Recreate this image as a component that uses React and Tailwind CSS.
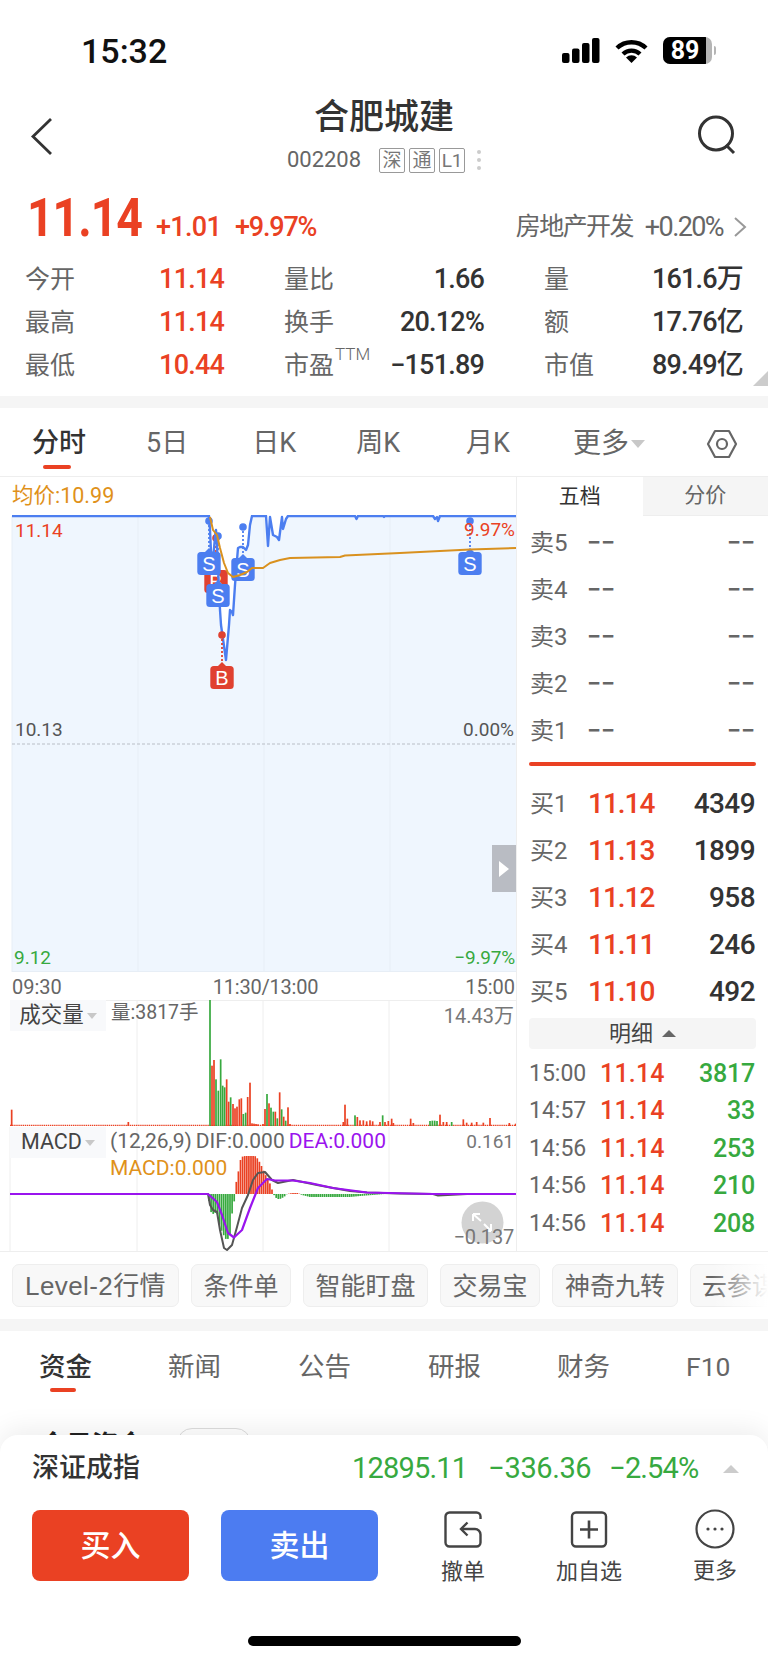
import React from "react";

const RED = "#ea4123";
const GREEN = "#37a93f";

// Intraday price line, in chart coordinates
const priceLine = [
  [12, 516], [209, 516], [210, 530], [211, 552], [213, 560], [215, 537], [216, 530], [217, 545], [218, 565], [219, 590],
  [220, 610], [221, 625], [226, 660], [229, 625], [230, 610], [232, 612], [233, 615], [235, 585], [237, 560], [238, 548],
  [240, 547], [243, 547], [246, 550], [248, 545], [250, 525], [252, 516], [266, 516], [268, 546], [270, 517], [273, 535],
  [277, 537], [279, 540], [282, 517], [283, 529], [286, 519], [288, 516], [355, 516], [356.5, 519], [358, 516], [383, 516],
  [384, 517], [385, 516], [433, 516], [435, 519], [437, 517], [438, 521], [440, 516], [516, 516],
];

// Average price line
const avgLine = [
  [210, 517], [213, 530], [217, 535], [220, 548], [224, 563], [228, 573], [233, 577], [240, 575], [247, 572], [252, 568],
  [263, 568], [270, 563], [280, 560], [290, 558], [340, 557], [345, 555.5], [400, 553], [470, 549.5], [516, 548],
];

const toPath = (pts) => pts.map((p, i) => `${i ? "L" : "M"}${p[0]} ${p[1]}`).join(" ");

// Volume bars around the morning burst: [x, top, colour]
const burstBars = [
  [60, 0, "g"], [66, 197, "r"], [72, 180, "r"], [78, 238, "g"], [85, 272, "g"], [92, 178, "g"], [98, 257, "g"], [104, 262, "g"],
  [110, 238, "r"], [116, 305, "r"], [122, 292, "g"], [129, 312, "r"], [135, 325, "r"], [141, 320, "r"], [148, 298, "r"],
  [154, 295, "r"], [160, 342, "g"], [167, 338, "g"], [173, 291, "r"], [180, 248, "r"], [186, 370, "r"], [192, 371, "r"],
  [198, 372, "r"], [204, 373, "r"], [219, 372, "r"], [225, 327, "r"], [231, 282, "g"], [237, 310, "r"], [243, 323, "g"],
  [250, 335, "g"], [256, 335, "r"], [262, 355, "g"], [269, 277, "r"], [275, 328, "g"], [281, 350, "r"], [287, 362, "g"],
  [294, 322, "r"], [300, 372, "r"],
].map(([z, top, c]) => ({ x: 190 + z / 3, h: (378 - top) / 3, c }));

// Afternoon volume bars: [x, top, colour]
const laterBars = [
  [35, 508, "r"], [385, 545, "r"], [1030, 545, "r"], [1035, 493, "r"], [1042, 535, "r"], [1065, 525, "g"], [1072, 530, "r"],
  [1080, 540, "r"], [1090, 540, "r"], [1100, 543, "r"], [1110, 540, "r"], [1118, 543, "r"], [1140, 545, "r"], [1148, 525, "g"],
  [1155, 545, "r"], [1165, 542, "r"], [1175, 535, "r"], [1180, 548, "r"], [1232, 535, "r"], [1240, 548, "r"], [1290, 542, "g"],
  [1297, 541, "g"], [1304, 541, "g"], [1311, 542, "g"], [1320, 523, "r"], [1330, 545, "r"], [1340, 545, "r"], [1355, 545, "g"],
  [1390, 537, "r"], [1400, 547, "r"], [1415, 547, "r"], [1430, 545, "r"], [1450, 547, "r"], [1470, 533, "r"], [1528, 548, "r"],
  [1547, 550, "r"],
].map(([z, top, c]) => ({ x: z / 3, h: (557 - top) / 3, c }));

const volumeBars = [...burstBars, ...laterBars];

// MACD histogram outline: [x, height] with positive values above the zero line
const macdOutline = [
  [208.5, -2], [210, -17], [213, -20], [217, -18], [220, -33], [223, -40], [227, -47], [230, -40], [232, -20], [234, -10],
  [235, 3], [237, 17], [239, 25], [241, 37], [245, 38], [250, 38], [255, 38], [258, 35], [262, 27], [265, 20], [268, 15],
  [271, 8], [273, 1], [274, -1], [277, -5], [280, -5], [284, -3], [287, 0], [292, 1], [298, 1], [302, -1], [310, -3],
  [330, -3], [350, -3], [360, -2], [385, 0], [516, 0],
];

const macdHeight = (x) => {
  for (let i = 1; i < macdOutline.length; i++) {
    const [x0, h0] = macdOutline[i - 1];
    const [x1, h1] = macdOutline[i];
    if (x <= x1) return h0 + ((x - x0) / (x1 - x0)) * (h1 - h0);
  }
  return 0;
};

const macdBars = [];
for (let x = 209; x < 390; x += 2.1) macdBars.push({ x, h: macdHeight(x) });

const difLine = [
  [10, 1194], [208, 1194], [210, 1205], [213, 1210], [217, 1212], [220, 1230], [224, 1248], [227, 1250], [232, 1245], [237, 1227],
  [242, 1208], [248, 1195], [253, 1180], [258, 1173], [265, 1172], [272, 1180], [278, 1183], [283, 1182], [293, 1180], [317, 1185],
  [333, 1188], [350, 1191], [367, 1192.5], [400, 1193.5], [433, 1194], [438, 1195.5], [467, 1194], [516, 1194],
];

const deaLine = [
  [10, 1194], [208, 1194], [217, 1202], [222, 1215], [228, 1233], [234, 1237.5], [242, 1230], [250, 1208], [258, 1188], [267, 1179],
  [275, 1180.5], [293, 1180.5], [310, 1183], [333, 1188], [367, 1192.5], [433, 1194], [516, 1194],
];

// Trade marker: a pin with a dotted stem down to a lettered tag
function Marker({ x, dotY, top, letter, color }) {
  return (
    <g>
      <line x1={x} y1={dotY} x2={x} y2={top} stroke={color} strokeWidth="1.8" strokeDasharray="2 2" />
      <circle cx={x} cy={dotY} r="3.8" fill={color} />
      <path d={`M${x - 4} ${top} L${x} ${top - 4} L${x + 4} ${top} Z`} fill={color} />
      <rect x={x - 11.7} y={top} width="23.4" height="23" rx="3.5" fill={color} />
      <text x={x} y={top + 18.5} textAnchor="middle" fontSize="20" fill="#fff" fontFamily="Liberation Sans">
        {letter}
      </text>
    </g>
  );
}

function PriceChart() {
  return (
    <div className="relative h-[457px]">
      <svg className="block h-full w-full" viewBox="0 515 516 457">
        <path d={`${toPath(priceLine)} L516 972 L12 972 Z`} fill="#eff6fe" />
        {[138, 264, 390].map((x) => (
          <line key={x} x1={x} y1="516" x2={x} y2="972" stroke="#e7eef6" strokeWidth="1" />
        ))}
        <line x1="12" y1="516" x2="12" y2="972" stroke="#e7eef6" />
        <line x1="12" y1="971.5" x2="516" y2="971.5" stroke="#e7eef6" />
        <line x1="12" y1="744" x2="516" y2="744" stroke="#b9bec6" strokeWidth="1" strokeDasharray="3 2" />
        <Marker x={216} dotY={538} top={570} letter="B" color="#e04130" />
        <path d={toPath(priceLine)} fill="none" stroke="#4c7ef0" strokeWidth="2.4" strokeLinejoin="round" />
        <Marker x={209} dotY={521} top={552} letter="S" color="#4c7ef0" />
        <Marker x={218} dotY={536} top={584} letter="S" color="#4c7ef0" />
        <Marker x={243} dotY={527} top={558} letter="S" color="#4c7ef0" />
        <Marker x={222} dotY={635} top={666} letter="B" color="#e04130" />
        <Marker x={470} dotY={521} top={552} letter="S" color="#4c7ef0" />
        <path d={toPath(avgLine)} fill="none" stroke="#d9911f" strokeWidth="2" strokeLinejoin="round" />
      </svg>
      <span className="absolute left-[15px] top-[4px] text-[19px] leading-[24px] text-[#ea4123]">11.14</span>
      <span className="absolute right-[1px] top-[3px] text-[19px] leading-[24px] text-[#ea4123]">9.97%</span>
      <span className="absolute left-[15px] top-[203px] text-[19px] leading-[24px] text-[#555]">10.13</span>
      <span className="absolute right-[2px] top-[203px] text-[19px] leading-[24px] text-[#555]">0.00%</span>
      <span className="absolute left-[14px] top-[431px] text-[19px] leading-[24px] text-[#37a93f]">9.12</span>
      <span className="absolute right-[1px] top-[431px] text-[19px] leading-[24px] tracking-[-0.2px] text-[#37a93f]">−9.97%</span>
      <div className="absolute right-0 top-[330px] flex h-[47px] w-[24px] items-center justify-center bg-[#b9bcc3]">
        <span className="h-0 w-0 border-y-[8px] border-l-[10px] border-y-transparent border-l-white" />
      </div>
    </div>
  );
}

function TagBox({ children }) {
  return (
    <div className="absolute left-[10px] top-0 flex h-[31px] w-[96px] items-center justify-center gap-[3px] bg-[#f8f9fb] text-[21.5px] text-[#444]">
      {children}
      <span className="h-0 w-0 border-x-[5px] border-t-[6px] border-x-transparent border-t-[#c8c8c8]" />
    </div>
  );
}

function VolumeChart() {
  return (
    <div className="relative h-[127px]">
      <svg className="block h-full w-full" viewBox="0 1000 516 127">
        <line x1="10" y1="1000.5" x2="516" y2="1000.5" stroke="#eee" />
        {[137, 263, 389].map((x) => (
          <line key={x} x1={x} y1="1000" x2={x} y2="1126" stroke="#eee" />
        ))}
        <line x1="10" y1="1125.3" x2="516" y2="1125.3" stroke="#ea4123" strokeWidth="1.2" strokeDasharray="1.4 0.7" />
        {volumeBars.map((b, i) => (
          <rect key={i} x={b.x - 0.85} y={1126 - b.h} width="1.7" height={b.h} fill={b.c === "g" ? GREEN : RED} />
        ))}
      </svg>
      <TagBox>成交量</TagBox>
      <span className="absolute left-[111px] top-0 text-[19.5px] leading-[26px] text-[#666]">量:3817手</span>
      <span className="absolute right-[2px] top-[3px] text-[20px] leading-[26px] text-[#777]">14.43万</span>
    </div>
  );
}

function MacdChart() {
  return (
    <div className="relative h-[125px]">
      <svg className="block h-full w-full" viewBox="0 1127 516 125">
        {[137, 263, 389].map((x) => (
          <line key={x} x1={x} y1="1127" x2={x} y2="1252" stroke="#eee" />
        ))}
        <line x1="10" y1="1127" x2="10" y2="1252" stroke="#eee" />
        <line x1="10" y1="1251.5" x2="516" y2="1251.5" stroke="#eee" />
        {macdBars.map((b, i) => (
          <rect
            key={i}
            x={b.x - 0.85}
            y={b.h > 0 ? 1194 - b.h : 1194}
            width="1.7"
            height={Math.abs(b.h)}
            fill={b.h > 0 ? RED : GREEN}
          />
        ))}
        <path d={toPath(difLine)} fill="none" stroke="#555" strokeWidth="2" strokeLinejoin="round" />
        <path d={toPath(deaLine)} fill="none" stroke="#9a14ee" strokeWidth="2.2" strokeLinejoin="round" />
        <circle cx="482.5" cy="1222.5" r="21" fill="#8c8c8c" fillOpacity="0.38" />
        <path
          d="M473 1214 L481 1221 M473 1214 h7 M473 1214 v7 M491 1231 L484 1224 M491 1231 h-7 M491 1231 v-7"
          stroke="#fff"
          strokeWidth="2"
          fill="none"
        />
      </svg>
      <TagBox>MACD</TagBox>
      <div className="absolute left-[110px] top-[1px] flex gap-[4px] whitespace-nowrap text-[21px] leading-[26px]">
        <span className="text-[#666]">(12,26,9)</span>
        <span className="text-[#666]">DIF:0.000</span>
        <span className="text-[#9a14ee]">DEA:0.000</span>
      </div>
      <span className="absolute left-[110px] top-[28px] text-[21px] leading-[26px] text-[#e0911a]">MACD:0.000</span>
      <span className="absolute right-[2px] top-[2px] text-[19px] leading-[26px] text-[#777]">0.161</span>
      <span className="absolute right-[2px] top-[97px] text-[20px] leading-[26px] tracking-[-0.2px] text-[#777]">−0.137</span>
    </div>
  );
}

function Stat({ label, value, sup, valueClass }) {
  return (
    <div className="flex h-[43px] items-center justify-between whitespace-nowrap">
      <span className="text-[25px] leading-none text-[#666]">
        {label}
        {sup && <sup className="ml-[1px] align-top text-[17px] font-light leading-[18px]">{sup}</sup>}
      </span>
      <span className={`text-[27px] font-medium leading-none tracking-[-0.8px] ${valueClass}`}>{value}</span>
    </div>
  );
}

function AskRow({ label }) {
  return (
    <div className="flex h-[47px] items-center pl-[13px] pr-[13px] text-[#666]">
      <span className="w-[57px] text-[24px] leading-none">{label}</span>
      <span className="text-[25px] font-medium leading-none">−−</span>
      <span className="ml-auto text-[25px] font-medium leading-none">−−</span>
    </div>
  );
}

function BidRow({ label, price, qty }) {
  return (
    <div className="flex h-[47px] items-center pl-[13px] pr-[13px]">
      <span className="w-[58px] text-[24px] leading-none text-[#666]">{label}</span>
      <span className="text-[28px] font-medium leading-none tracking-[-1px] text-[#ea4123]">{price}</span>
      <span className="ml-auto text-[28px] font-medium leading-none tracking-[-0.6px] text-[#333]">{qty}</span>
    </div>
  );
}

function TradeRow({ time, qty }) {
  return (
    <div className="flex h-[37.5px] items-center pl-[12px] pr-[13px] pt-[1px]">
      <span className="w-[71px] text-[23px] leading-none text-[#666]">{time}</span>
      <span className="text-[25px] font-medium leading-none tracking-[0.2px] text-[#ea4123]">11.14</span>
      <span className="ml-auto text-[25px] font-medium leading-none tracking-[-0.2px] text-[#37a93f]">{qty}</span>
    </div>
  );
}

function OrderPanel() {
  return (
    <div className="w-[252px] border-l border-[#eee]">
      <div className="flex h-[39px]">
        <div className="flex flex-1 items-center justify-center text-[21px] text-[#333]">五档</div>
        <div className="flex flex-1 items-center justify-center border-b border-[#eee] bg-[#f5f5f5] text-[21px] text-[#666]">
          分价
        </div>
      </div>
      <div className="pt-[3px]">
        <AskRow label="卖5" />
        <AskRow label="卖4" />
        <AskRow label="卖3" />
        <AskRow label="卖2" />
        <AskRow label="卖1" />
      </div>
      <div className="mx-[12px] mt-[8px] h-[4px] rounded-full bg-[#ea4123]" />
      <div className="mt-[14px]">
        <BidRow label="买1" price="11.14" qty="4349" />
        <BidRow label="买2" price="11.13" qty="1899" />
        <BidRow label="买3" price="11.12" qty="958" />
        <BidRow label="买4" price="11.11" qty="246" />
        <BidRow label="买5" price="11.10" qty="492" />
      </div>
      <div className="mx-[12px] mt-[3px] flex h-[31px] items-center justify-center gap-[9px] rounded-[4px] bg-[#f5f5f5] text-[22px] text-[#444]">
        明细
        <span className="h-0 w-0 border-x-[7px] border-b-[7px] border-x-transparent border-b-[#666]" />
      </div>
      <div className="mt-[5px]">
        <TradeRow time="15:00" qty="3817" />
        <TradeRow time="14:57" qty="33" />
        <TradeRow time="14:56" qty="253" />
        <TradeRow time="14:56" qty="210" />
        <TradeRow time="14:56" qty="208" />
      </div>
    </div>
  );
}

function Chip({ children, className }) {
  return (
    <div
      className={`flex h-[43px] shrink-0 items-center justify-center rounded-[7px] border border-[#eee] bg-[#f8f8f8] pt-[1px] leading-none text-[#666] ${className}`}
    >
      {children}
    </div>
  );
}

function ActionLabel({ children }) {
  return <span className="mt-[11px] text-[22px] leading-[24px] text-[#444]">{children}</span>;
}

export default function App() {
  return (
    <div className="relative h-[1663px] w-[768px] overflow-hidden bg-white font-['Roboto','Noto_Sans_CJK_SC',sans-serif]">
      {/* Status bar */}
      <div className="flex h-[95px] items-start justify-between pl-[81px] pr-[52px] pt-[29px]">
        <span className="text-[34px] font-medium leading-[44px] text-[#111]">15:32</span>
        <div className="flex items-center pt-[8px]">
          <svg width="38" height="25" viewBox="0 0 38 25">
            <rect x="0" y="15" width="7.5" height="10" rx="2" />
            <rect x="10" y="10.5" width="7.5" height="14.5" rx="2" />
            <rect x="20" y="5" width="7.5" height="20" rx="2" />
            <rect x="30" y="0" width="7.5" height="25" rx="2" />
          </svg>
          <svg className="ml-[15px]" width="33" height="24" viewBox="0 0 33 24">
            <path d="M2 9 A21 21 0 0 1 31 9" fill="none" stroke="#000" strokeWidth="4.4" />
            <path d="M8 15 A12.5 12.5 0 0 1 25 15" fill="none" stroke="#000" strokeWidth="4.4" />
            <path d="M16.5 24 L11 18.5 A8 8 0 0 1 22 18.5 Z" />
          </svg>
          <div className="relative ml-[15px] flex h-[27px] w-[49px] items-center justify-center overflow-hidden rounded-[7px] bg-[#b5b5b5]">
            <div className="absolute inset-y-0 left-0 w-[43px] bg-black" />
            <span className="relative pr-[5px] text-[25px] font-bold leading-[27px] text-white">89</span>
          </div>
          <div className="ml-[2px] h-[9px] w-[2px] rounded-r-full bg-[#b5b5b5]" />
        </div>
      </div>

      {/* Navigation header */}
      <div className="relative flex h-[85px] flex-col items-center">
        <svg className="absolute left-[30px] top-[21px]" width="24" height="40" viewBox="0 0 24 40">
          <path d="M21 3 L3 20.5 L21 38" fill="none" stroke="#333" strokeWidth="2.8" />
        </svg>
        <svg className="absolute right-[31px] top-[20px]" width="40" height="40" viewBox="0 0 40 40">
          <circle cx="19" cy="18.5" r="16.5" fill="none" stroke="#333" strokeWidth="3" />
          <path d="M29 30 L37 38" stroke="#333" strokeWidth="3" />
        </svg>
        <h1 className="mt-[3px] text-[35px] font-medium leading-[40px] text-[#333]">合肥城建</h1>
        <div className="mt-[9px] flex items-center">
          <span className="text-[22px] leading-[26px] text-[#666]">002208</span>
          <div className="ml-[18px] flex gap-[4px]">
            {["深", "通", "L1"].map((t) => (
              <span
                key={t}
                className="flex h-[25px] w-[26px] items-center justify-center rounded-[2px] border border-[#999] text-[19px] leading-none text-[#777]"
              >
                {t}
              </span>
            ))}
          </div>
          <div className="ml-[12px] flex flex-col gap-[4px]">
            <span className="h-[4px] w-[4px] rounded-full bg-[#ccc]" />
            <span className="h-[4px] w-[4px] rounded-full bg-[#ccc]" />
            <span className="h-[4px] w-[4px] rounded-full bg-[#ccc]" />
          </div>
        </div>
      </div>

      {/* Quote summary */}
      <div className="flex h-[78px] items-start pl-[27px] pr-[21px] pt-[7px] whitespace-nowrap text-[#ea4123]">
        <span className="w-[115px] origin-left scale-x-[0.86] text-[54px] font-bold leading-[62px] tracking-[-1.2px]">11.14</span>
        <span className="ml-[14px] mt-[21px] text-[27px] font-medium leading-[38px] tracking-[-0.7px]">+1.01</span>
        <span className="ml-[14px] mt-[21px] text-[27px] font-medium leading-[38px] tracking-[-1.2px]">+9.97%</span>
        <div className="ml-auto mt-[21px] flex items-center text-[#666]">
          <span className="text-[25px] leading-[38px] tracking-[-1.6px]">房地产开发</span>
          <span className="ml-[12px] text-[27px] leading-[38px] tracking-[-1.6px]">+0.20%</span>
          <svg className="ml-[10px]" width="14" height="22" viewBox="0 0 14 22">
            <path d="M2 2 L12 11 L2 20" fill="none" stroke="#999" strokeWidth="2" />
          </svg>
        </div>
      </div>

      {/* Key statistics */}
      <div className="relative h-[138px] pl-[25px]">
        <div className="grid grid-cols-[199px_200px_199px] gap-x-[60px]">
          <Stat label="今开" value="11.14" valueClass="text-[#ea4123]" />
          <Stat label="量比" value="1.66" valueClass="text-[#333]" />
          <Stat label="量" value="161.6万" valueClass="text-[#333]" />
          <Stat label="最高" value="11.14" valueClass="text-[#ea4123]" />
          <Stat label="换手" value="20.12%" valueClass="text-[#333]" />
          <Stat label="额" value="17.76亿" valueClass="text-[#333]" />
          <Stat label="最低" value="10.44" valueClass="text-[#ea4123]" />
          <Stat label="市盈" sup="TTM" value="−151.89" valueClass="text-[#333]" />
          <Stat label="市值" value="89.49亿" valueClass="text-[#333]" />
        </div>
        <span className="absolute bottom-[10px] right-0 h-0 w-0 border-b-[15px] border-l-[15px] border-b-[#ccc] border-l-transparent" />
      </div>

      <div className="h-[12px] bg-[#f5f5f5]" />

      {/* Chart period tabs */}
      <div className="relative h-[69px] border-b border-[#eee] text-[27px] leading-none text-[#666]">
        <div className="flex h-[68px] items-center pt-[3px]">
          <span className="ml-[32px] font-medium text-[#333]">分时</span>
          <span className="ml-[60px]">5日</span>
          <span className="ml-[64px]">日K</span>
          <span className="ml-[60px]">周K</span>
          <span className="ml-[66px]">月K</span>
          <span className="ml-[63px] text-[28px]">更多</span>
          <span className="ml-[2px] h-0 w-0 border-x-[7px] border-t-[8px] border-x-transparent border-t-[#c8c8c8]" />
          <svg className="ml-[61px]" width="32" height="30" viewBox="0 0 32 30">
            <path d="M9 2 H23 L30 15 L23 28 H9 L2 15 Z" fill="none" stroke="#666" strokeWidth="2.2" strokeLinejoin="round" />
            <circle cx="16" cy="15" r="5" fill="none" stroke="#666" strokeWidth="2.2" />
          </svg>
        </div>
        <span className="absolute bottom-[7px] left-[43px] h-[4px] w-[28px] rounded-full bg-[#ea4123]" />
      </div>

      {/* Charts and order book */}
      <div className="flex h-[775px] border-b border-[#eee]">
        <div className="w-[516px]">
          <div className="flex h-[38px] items-center pl-[12px] text-[21.5px] leading-none text-[#e0911a]">均价:10.99</div>
          <PriceChart />
          <div className="flex h-[28px] items-center justify-between pl-[12px] pr-[1px] pt-[2px] text-[20px] leading-none text-[#666]">
            <span>09:30</span>
            <span className="pl-[4px] tracking-[-0.2px]">11:30/13:00</span>
            <span>15:00</span>
          </div>
          <VolumeChart />
          <MacdChart />
        </div>
        <OrderPanel />
      </div>

      {/* Shortcut chips */}
      <div className="relative flex h-[67px] gap-[12px] overflow-hidden pl-[12px] pt-[12px] text-[25px]">
        <Chip className="w-[167px] font-['Liberation_Sans','Noto_Sans_CJK_SC',sans-serif] text-[26px] tracking-[0.4px]">Level-2行情</Chip>
        <Chip className="w-[100px]">条件单</Chip>
        <Chip className="w-[125px]">智能盯盘</Chip>
        <Chip className="w-[100px]">交易宝</Chip>
        <Chip className="w-[126px]">神奇九转</Chip>
        <Chip className="w-[100px] justify-start pl-[11px]">云参谋</Chip>
        <div className="absolute inset-y-0 right-0 w-[56px] bg-gradient-to-r from-transparent to-white" />
      </div>

      <div className="h-[12px] bg-[#f5f5f5]" />

      {/* Detail tabs */}
      <div className="relative flex h-[72px] items-center text-[26.5px] leading-none text-[#666]">
        <span className="ml-[39px] font-medium text-[#333]">资金</span>
        <span className="ml-[76px]">新闻</span>
        <span className="ml-[77px]">公告</span>
        <span className="ml-[77px]">研报</span>
        <span className="ml-[76px]">财务</span>
        <span className="ml-[76px]">F10</span>
        <span className="absolute bottom-[11px] left-[50px] h-[4px] w-[26px] rounded-full bg-[#ea4123]" />
      </div>

      {/* Section heading that runs under the bottom sheet */}
      <div className="flex h-[40px] items-start pl-[40px] pt-[29px]">
        <span className="text-[26px] font-bold leading-none text-[#222]">今日资金</span>
        <span className="ml-[33px] -mt-[4px] h-[30px] w-[74px] rounded-full border border-[#ddd]" />
      </div>

      {/* Bottom sheet: index ticker and trade actions */}
      <div className="absolute inset-x-0 bottom-0 h-[228px] rounded-t-[18px] bg-white shadow-[0_-6px_26px_rgba(0,0,0,0.07)]">
        <div className="flex h-[64px] items-center whitespace-nowrap pl-[32px] pt-[3px]">
          <span className="text-[27px] font-medium leading-none text-[#333]">深证成指</span>
          <span className="ml-[212px] text-[29px] leading-none tracking-[-0.8px] text-[#37a93f]">12895.11</span>
          <span className="ml-[21px] text-[29px] leading-none tracking-[-0.4px] text-[#37a93f]">−336.36</span>
          <span className="ml-[18px] text-[29px] leading-none tracking-[-0.9px] text-[#37a93f]">−2.54%</span>
          <span className="ml-[25px] h-0 w-0 border-x-[8px] border-b-[8px] border-x-transparent border-b-[#ccc]" />
        </div>
        <div className="mt-[11px] flex items-start">
          <button className="ml-[32px] flex h-[71px] w-[157px] items-center justify-center rounded-[8px] bg-[#ea4123] text-[30px] font-medium leading-none text-white">
            买入
          </button>
          <button className="ml-[32px] flex h-[71px] w-[157px] items-center justify-center rounded-[8px] bg-[#4c7cf1] text-[30px] font-medium leading-none text-white">
            卖出
          </button>
          <div className="ml-[63px] flex w-[44px] flex-col items-center">
            <svg width="38" height="38" viewBox="0 0 38 38" className="mt-[1px]">
              <path
                d="M36.5 8 V5.5 A4 4 0 0 0 32.5 1.5 H5.5 A4 4 0 0 0 1.5 5.5 V31.5 A4 4 0 0 0 5.5 35.5 H32.5 A4 4 0 0 0 36.5 31.5 V23.5 A5.5 5.5 0 0 0 31 18 H17"
                fill="none"
                stroke="#444"
                strokeWidth="2.4"
              />
              <path d="M23.5 11.5 L17 18 L23.5 24.5" fill="none" stroke="#444" strokeWidth="2.4" />
            </svg>
            <ActionLabel>撤单</ActionLabel>
          </div>
          <div className="ml-[71px] flex w-[66px] flex-col items-center">
            <svg width="38" height="38" viewBox="0 0 38 38" className="mt-[1px]">
              <rect x="2" y="1.5" width="34" height="34" rx="4" fill="none" stroke="#444" strokeWidth="2.4" />
              <path d="M19 9.5 V27.5 M10 18.5 H28" stroke="#444" strokeWidth="2.6" />
            </svg>
            <ActionLabel>加自选</ActionLabel>
          </div>
          <div className="ml-[71px] flex w-[44px] flex-col items-center">
            <svg width="40" height="40" viewBox="0 0 40 40" className="-mt-[1px]">
              <circle cx="20" cy="20" r="18.5" fill="none" stroke="#444" strokeWidth="2.2" />
              <circle cx="13" cy="20" r="1.6" fill="#444" />
              <circle cx="20" cy="20" r="1.6" fill="#444" />
              <circle cx="27" cy="20" r="1.6" fill="#444" />
            </svg>
            <span className="mt-[10px] text-[22px] leading-[24px] text-[#444]">更多</span>
          </div>
        </div>
        <div className="absolute bottom-[17px] left-[248px] h-[10px] w-[273px] rounded-full bg-black" />
      </div>
    </div>
  );
}
